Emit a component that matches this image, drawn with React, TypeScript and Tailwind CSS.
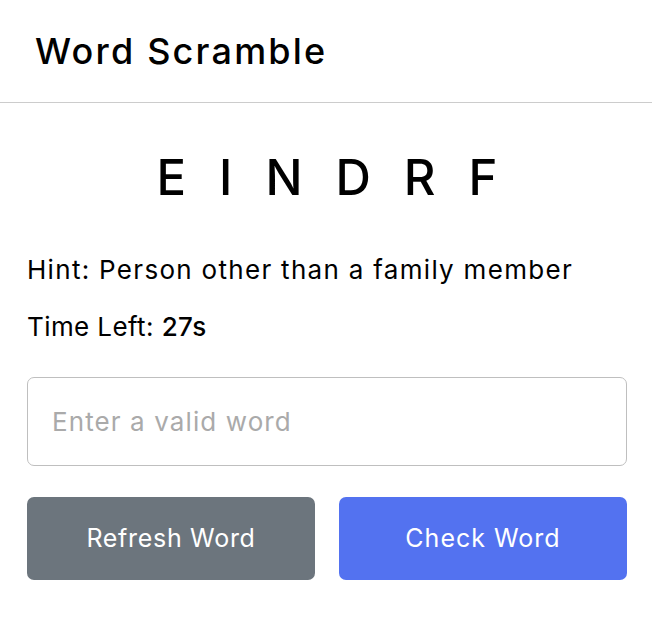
export default function App() {
  return (
    <div className="min-h-screen w-[652px] bg-white text-black" style={{ fontFamily: "Inter, 'Noto Sans', sans-serif" }}>
      <h2 className="border-b border-[#cccccc] px-[35px] py-[24px] text-[36px] font-medium leading-[54px] tracking-[2.2px]">Word Scramble</h2>
      <div className="ml-[27px] mt-[38px] w-[600px]">
        <p className="mr-[-33px] text-center text-[49px] font-medium uppercase leading-[74px] tracking-[33px]">eindrf</p>
        <div className="mt-[35px] mb-[30px]">
          <p className="mb-[17px] text-[26px] leading-[40px] tracking-[1.3px]">Hint: <span>Person other than a family member</span></p>
          <p className="text-[26px] leading-[40px] tracking-[0.4px]">
            Time Left: <b className="font-medium">27s</b>
          </p>
        </div>
        <input
          className="h-[89px] w-full rounded-[7px] border border-[#bfbfbf] px-[24px] text-[26px] tracking-[1.1px] outline-none placeholder:text-[#aaaaaa]"
          placeholder="Enter a valid word"
        />
        <div className="mt-[31px] flex justify-between">
          <button className="w-[288px] rounded-[7px] bg-[#6c757d] py-[22px] text-[25px] leading-[39px] tracking-[0.7px] text-white">Refresh Word</button>
          <button className="w-[288px] rounded-[7px] bg-[#5372f0] py-[22px] text-[25px] leading-[39px] tracking-[1px] text-white">Check Word</button>
        </div>
      </div>
    </div>
  );
}
